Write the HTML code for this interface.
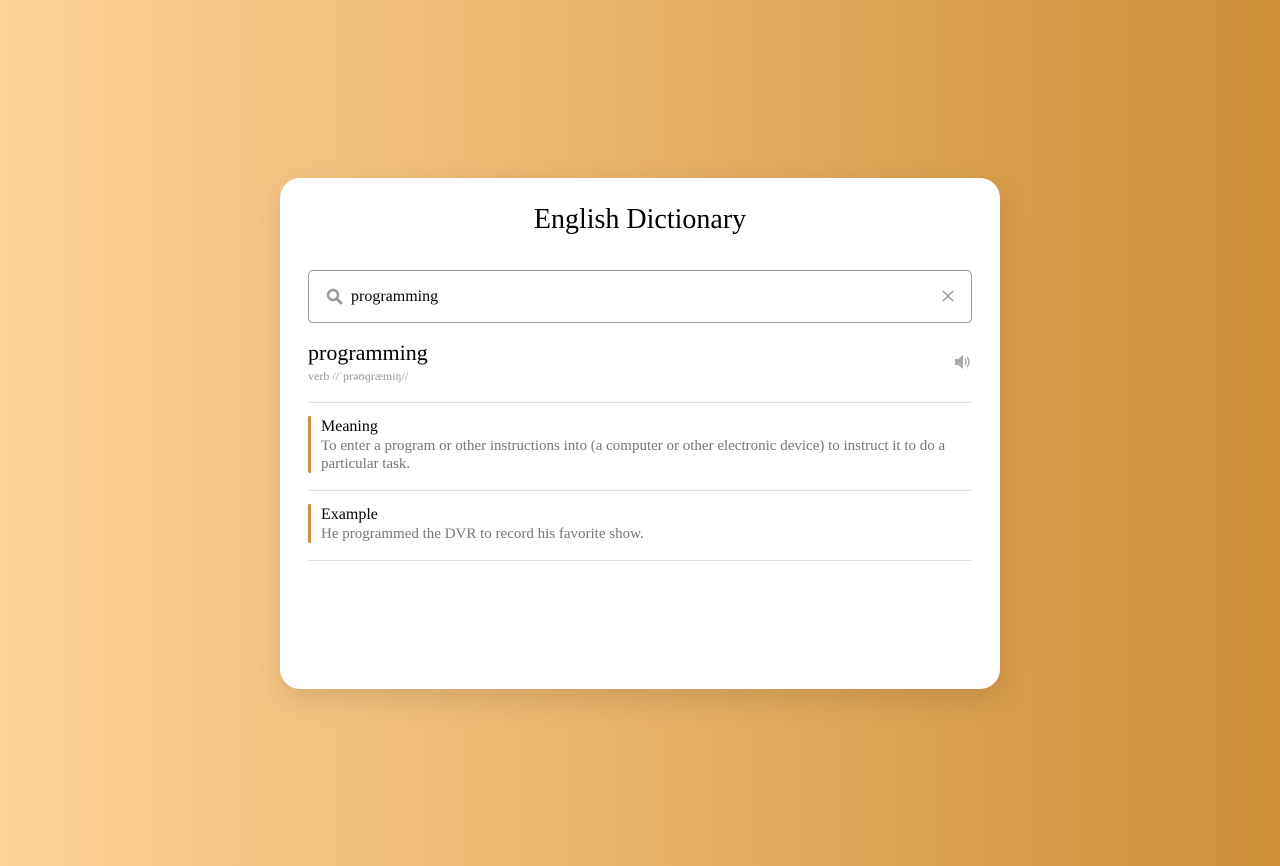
<!DOCTYPE html>
<html><head><meta charset="utf-8"><style>
*{margin:0;padding:0;box-sizing:border-box}
html,body{width:1280px;height:866px;overflow:hidden}
body{background:linear-gradient(to right,#ffd398,#ce8f38);font-family:"Liberation Serif",serif;position:relative}
.card{position:absolute;left:280px;top:178px;width:720px;height:511px;background:#fff;border-radius:20px;box-shadow:0 10px 30px rgba(0,0,0,.12)}
h1{position:absolute;top:26px;width:100%;text-align:center;font-weight:normal;font-size:28px;color:#000}
.search{position:absolute;left:28px;top:92px;width:664px;height:53px;border:1px solid #999;border-radius:5px}
.search svg.s{position:absolute;left:17px;top:17px}
.search .t{position:absolute;left:42px;top:17px;font-size:16px}
.search .x{position:absolute;right:16px;top:18px}
.word{position:absolute;left:28px;top:162px;font-size:22px}
.ph{position:absolute;left:28px;top:191px;font-size:12px;color:#999}
.spk{position:absolute;right:28px;top:176px}
.hr{position:absolute;left:28px;width:663px;height:1px;background:#ddd}
.sec{position:absolute;left:28px;width:650px;border-left:3px solid #d2913a;border-radius:2px;padding-left:10px}
.sec b{display:block;font-weight:normal;font-size:16px;line-height:20px;color:#000;margin-top:1px}
.sec p{font-size:15px;line-height:18px;color:#777}
</style></head><body>
<div class="card">
<h1>English Dictionary</h1>
<div class="search">
<svg class="s" width="17" height="17" viewBox="0 0 17 17"><circle cx="7" cy="7" r="5" fill="none" stroke="#999" stroke-width="2.4"/><line x1="10.5" y1="10.5" x2="15" y2="15" stroke="#999" stroke-width="3" stroke-linecap="round"/></svg>
<div class="t">programming</div>
<svg class="x" width="14" height="14" viewBox="0 0 14 14"><path d="M2 2L12 12M12 2L2 12" stroke="#999" stroke-width="1.5"/></svg>
</div>
<div class="word">programming</div>
<div class="ph">verb //ˈprəʊɡræmɪŋ//</div>
<svg class="spk" width="18" height="16" viewBox="0 0 18 16"><path d="M1 5h3l5-4v14l-5-4H1z" fill="#aaa"/><path d="M11 5q2 3 0 6M13 3q4 5 0 10" stroke="#aaa" stroke-width="1.5" fill="none"/></svg>
<div class="hr" style="top:224px"></div>
<div class="sec" style="top:238px"><b>Meaning</b><p>To enter a program or other instructions into (a computer or other electronic device) to instruct it to do a particular task.</p></div>
<div class="hr" style="top:312px"></div>
<div class="sec" style="top:326px"><b>Example</b><p>He programmed the DVR to record his favorite show.</p></div>
<div class="hr" style="top:382px"></div>
</div>
</body></html>
